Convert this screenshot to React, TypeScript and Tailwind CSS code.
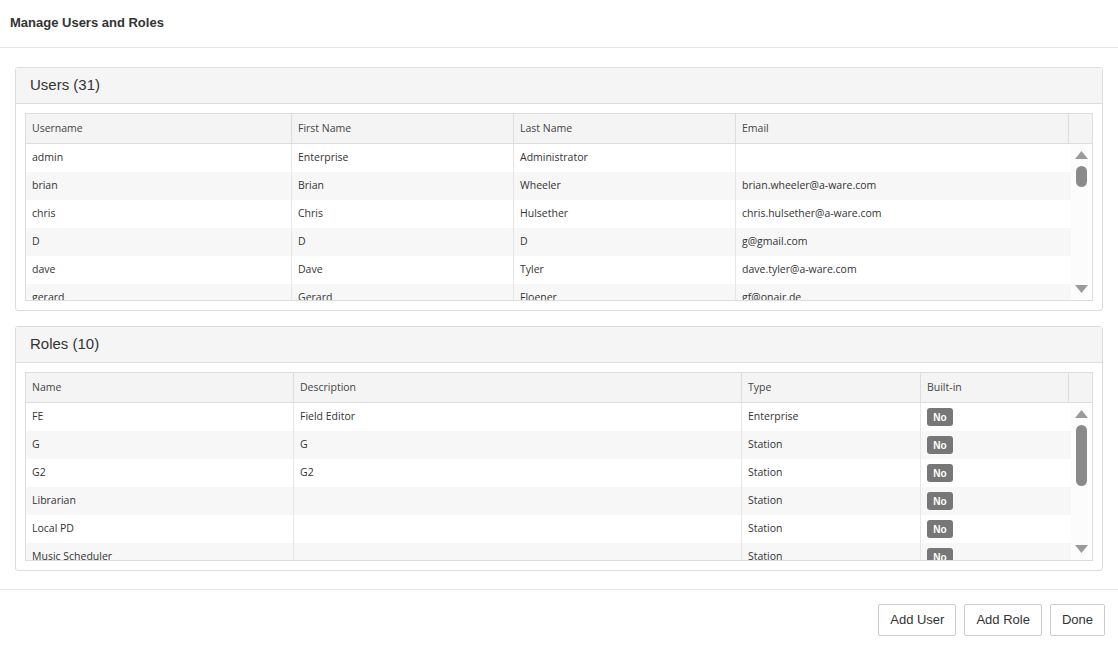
import React from "react";

type Column = { title: string; width?: string };

const userColumns: Column[] = [
  { title: "Username", width: "w-[266px]" },
  { title: "First Name", width: "w-[222px]" },
  { title: "Last Name", width: "w-[222px]" },
  { title: "Email", width: "w-[333px]" },
];

const users = [
  ["admin", "Enterprise", "Administrator", ""],
  ["brian", "Brian", "Wheeler", "brian.wheeler@a-ware.com"],
  ["chris", "Chris", "Hulsether", "chris.hulsether@a-ware.com"],
  ["D", "D", "D", "g@gmail.com"],
  ["dave", "Dave", "Tyler", "dave.tyler@a-ware.com"],
  ["gerard", "Gerard", "Floener", "gf@onair.de"],
  ["jane", "Jane", "Doe", "jane@a-ware.com"],
];

const roleColumns: Column[] = [
  { title: "Name", width: "w-[268px]" },
  { title: "Description", width: "w-[448px]" },
  { title: "Type", width: "w-[179px]" },
  { title: "Built-in", width: "w-[148px]" },
];

const roles = [
  ["FE", "Field Editor", "Enterprise"],
  ["G", "G", "Station"],
  ["G2", "G2", "Station"],
  ["Librarian", "", "Station"],
  ["Local PD", "", "Station"],
  ["Music Scheduler", "", "Station"],
  ["Traffic", "", "Station"],
];

const Scrollbar = ({ thumbTop, thumbHeight }: { thumbTop: number; thumbHeight: number }) => (
  <div className="w-[21px] shrink-0 bg-[#fcfcfc] flex flex-col items-center pt-[7px]">
    <svg width="13" height="8" viewBox="0 0 13 8">
      <path d="M6.5 0 L13 8 L0 8 Z" fill="#9a9a9a" />
    </svg>
    <div className="flex-1 w-full flex flex-col items-center">
      <div className="w-[11px] rounded-full bg-[#8a8a8a]" style={{ marginTop: thumbTop, height: thumbHeight }} />
    </div>
    <svg width="13" height="8" viewBox="0 0 13 8" className="mb-[7px]">
      <path d="M0 0 L13 0 L6.5 8 Z" fill="#9a9a9a" />
    </svg>
  </div>
);

const Badge = () => (
  <span className="inline-flex items-center justify-center w-[26px] h-[18px] rounded-[3px] bg-[#777777] text-white text-[10px] font-bold font-['Liberation_Sans',sans-serif]">
    No
  </span>
);

const Grid = ({
  columns,
  rows,
  bodyHeight,
  thumbTop,
  thumbHeight,
}: {
  columns: Column[];
  rows: React.ReactNode[][];
  bodyHeight: string;
  thumbTop: number;
  thumbHeight: number;
}) => (
  <div className="border border-[#dddddd] font-['Open_Sans',sans-serif] text-[10.5px] text-[#333333]">
    <div className="flex h-[30px] bg-[#f4f4f4] border-b border-[#dddddd] text-[#444444]">
      {columns.map((c) => (
        <div key={c.title} className={`${c.width} shrink-0 border-r border-[#dddddd] px-[6px] flex items-center`}>
          {c.title}
        </div>
      ))}
      <div className="flex-1" />
    </div>
    <div className={`flex ${bodyHeight}`}>
      <div className="flex-1 overflow-hidden">
        {rows.map((r, i) => (
          <div key={i} className={`flex h-[28px] ${i % 2 === 1 ? "bg-[#f7f7f7]" : "bg-white"}`}>
            {r.map((cell, j) => (
              <div
                key={j}
                className={`${columns[j].width} shrink-0 px-[6px] flex items-center ${j < r.length - 1 ? "border-r border-[#e6e6e6]" : ""}`}
              >
                {cell}
              </div>
            ))}
          </div>
        ))}
      </div>
      <Scrollbar thumbTop={thumbTop} thumbHeight={thumbHeight} />
    </div>
  </div>
);

const Panel = ({ title, children }: { title: string; children: React.ReactNode }) => (
  <div className="border border-[#dddddd] rounded-[3px] bg-white">
    <div className="h-[36px] bg-[#f5f5f5] border-b border-[#dddddd] px-[14px] flex items-center text-[15px] text-[#333333]">{title}</div>
    <div className="p-[9px]">{children}</div>
  </div>
);

const Button = ({ label }: { label: string }) => (
  <button className="h-[32px] px-[11px] border border-[#cccccc] bg-white text-[13px] text-[#333333] rounded-[2px]">{label}</button>
);

export default function App() {
  return (
    <div className="w-[1118px] h-[645px] bg-white flex flex-col font-['Liberation_Sans',Arial,sans-serif]">
      <div className="h-[48px] shrink-0 border-b border-[#e5e5e5] px-[10px] pb-[1px] flex items-center">
        <h1 className="text-[13px] font-bold text-[#333333]">Manage Users and Roles</h1>
      </div>
      <div className="px-[15px] pt-[19px] pb-[18px] flex flex-col gap-[15px] border-b border-[#e5e5e5]">
        <Panel title="Users (31)">
          <Grid columns={userColumns} rows={users} bodyHeight="h-[156px]" thumbTop={7} thumbHeight={21} />
        </Panel>
        <Panel title="Roles (10)">
          <Grid
            columns={roleColumns}
            rows={roles.map((r) => [...r, <Badge key="b" />])}
            bodyHeight="h-[157px]"
            thumbTop={7}
            thumbHeight={61}
          />
        </Panel>
      </div>
      <div className="flex justify-end gap-[8px] pt-[14px] pr-[13px]">
        <Button label="Add User" />
        <Button label="Add Role" />
        <Button label="Done" />
      </div>
    </div>
  );
}
